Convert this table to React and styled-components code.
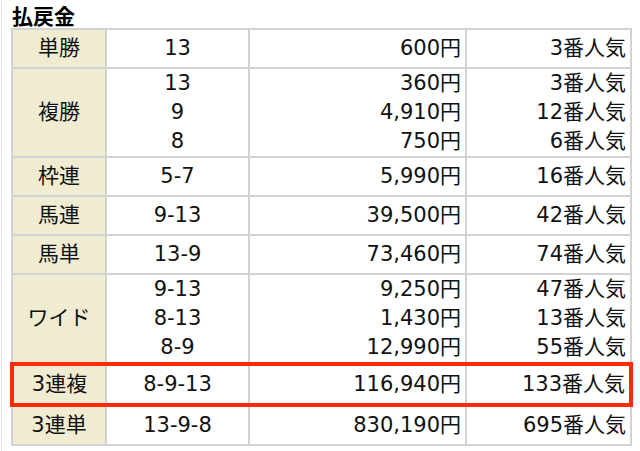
import React from 'react'
import styled, { createGlobalStyle } from 'styled-components'

const GlobalStyle = createGlobalStyle`
  body {
    margin: 0;
    background: #fff;
    font-family: "DejaVu Sans", "Noto Sans CJK JP", sans-serif;
    color: #111;
  }
`

const Frame = styled.div`
  margin-left: 1px;
  border-left: 1px solid #e2e2e2;
  height: 451px;
  padding-left: 8px;
  box-sizing: border-box;
`

const Title = styled.h2`
  margin: 0;
  padding: 3px 0 0 2px;
  height: 28px;
  box-sizing: border-box;
  font-family: "Noto Sans CJK JP", sans-serif;
  font-size: 21px;
  line-height: 24px;
  font-weight: 700;
  color: #000;
`

const Table = styled.table`
  border-collapse: collapse;
  table-layout: fixed;
  font-size: 21px;
  line-height: 29px;
`

const Cell = styled.td`
  border: 2px solid #d2d2d2;
  padding: ${p => (p.$multi ? '0' : '4px')} 4px;
  text-align: ${p => p.$align || 'center'};
  background: ${p => (p.$head ? '#efecd1' : '#fff')};
  vertical-align: middle;
  white-space: nowrap;

  tr.hl > & {
    border-top: 4px solid #ff2a06;
    border-bottom: 4px solid #ff2a06;
  }
  tr.hl > &:first-child {
    border-left: 4px solid #ff2a06;
  }
  tr.hl > &:last-child {
    border-right: 4px solid #ff2a06;
  }
`

const Line = styled.div``

const rows = [
  { type: '単勝', items: [['13', '600円', '3番人気']] },
  {
    type: '複勝',
    items: [
      ['13', '360円', '3番人気'],
      ['9', '4,910円', '12番人気'],
      ['8', '750円', '6番人気'],
    ],
  },
  { type: '枠連', items: [['5-7', '5,990円', '16番人気']] },
  { type: '馬連', items: [['9-13', '39,500円', '42番人気']] },
  { type: '馬単', items: [['13-9', '73,460円', '74番人気']] },
  {
    type: 'ワイド',
    items: [
      ['9-13', '9,250円', '47番人気'],
      ['8-13', '1,430円', '13番人気'],
      ['8-9', '12,990円', '55番人気'],
    ],
  },
  { type: '3連複', items: [['8-9-13', '116,940円', '133番人気']], hl: true },
  { type: '3連単', items: [['13-9-8', '830,190円', '695番人気']] },
]

const column = (items, i) => items.map((it, k) => <Line key={k}>{it[i]}</Line>)

const App = () => (
  <Frame>
    <GlobalStyle />
    <Title>払戻金</Title>
    <Table>
      <colgroup>
        <col style={{ width: 94 }} />
        <col style={{ width: 143 }} />
        <col style={{ width: 217 }} />
        <col style={{ width: 165 }} />
      </colgroup>
      <tbody>
        {rows.map(r => {
          const multi = r.items.length > 1
          return (
            <tr key={r.type} className={r.hl ? 'hl' : undefined}>
              <Cell $head>{r.type}</Cell>
              <Cell $multi={multi}>{column(r.items, 0)}</Cell>
              <Cell $multi={multi} $align="right">{column(r.items, 1)}</Cell>
              <Cell $multi={multi} $align="right">{column(r.items, 2)}</Cell>
            </tr>
          )
        })}
      </tbody>
    </Table>
  </Frame>
)

export default App
